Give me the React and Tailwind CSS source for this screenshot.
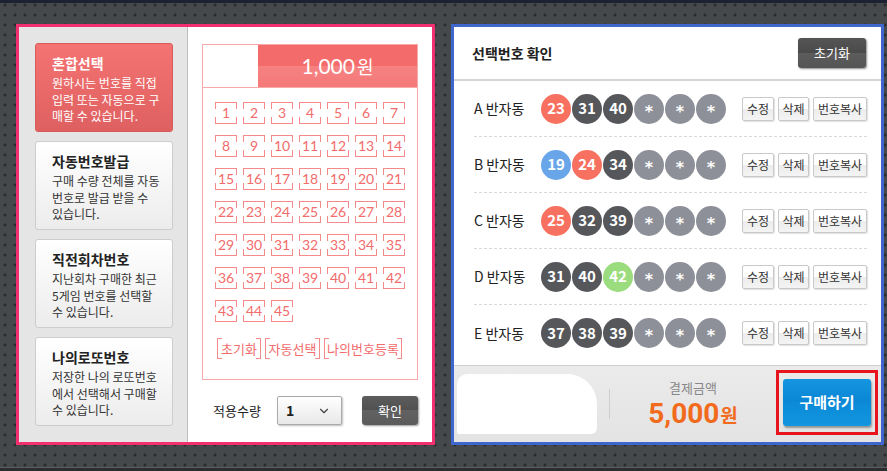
import { ChevronDown } from "lucide-react";

const MENU = [
  { title: "혼합선택", desc: ["원하시는 번호를 직접", "입력 또는 자동으로 구", "매할 수 있습니다."], active: true },
  { title: "자동번호발급", desc: ["구매 수량 전체를 자동", "번호로 발급 받을 수", "있습니다."] },
  { title: "직전회차번호", desc: ["지난회차 구매한 최근", "5게임 번호를 선택할", "수 있습니다."] },
  { title: "나의로또번호", desc: ["저장한 나의 로또번호", "에서 선택해서 구매할", "수 있습니다."] },
];

const BALL = {
  red: "bg-[#f8705f]",
  dark: "bg-[#55575b]",
  blue: "bg-[#68a6e9]",
  green: "bg-[#9bdc7e]",
  star: "bg-[#8d9098]",
};

const ROWS = [
  { label: "A 반자동", balls: [["23", "red"], ["31", "dark"], ["40", "dark"]] },
  { label: "B 반자동", balls: [["19", "blue"], ["24", "red"], ["34", "dark"]] },
  { label: "C 반자동", balls: [["25", "red"], ["32", "dark"], ["39", "dark"]] },
  { label: "D 반자동", balls: [["31", "dark"], ["40", "dark"], ["42", "green"]] },
  { label: "E 반자동", balls: [["37", "dark"], ["38", "dark"], ["39", "dark"]] },
];

const KR = "font-['Noto_Sans_CJK_KR',sans-serif]";

function NumBox({ n }) {
  return (
    <div className="relative flex h-[22px] w-[22px] items-center justify-center border-y border-[#f58a8a] font-['Lato','Noto_Sans_CJK_KR',sans-serif] text-[14px] leading-none text-[#f26c6c]">
      <span className="absolute left-0 top-0 h-[6px] w-px bg-[#f58a8a]" />
      <span className="absolute bottom-0 left-0 h-[6px] w-px bg-[#f58a8a]" />
      <span className="absolute right-0 top-0 h-[6px] w-px bg-[#f58a8a]" />
      <span className="absolute bottom-0 right-0 h-[6px] w-px bg-[#f58a8a]" />
      {n}
    </div>
  );
}

function BracketBtn({ children, w }) {
  return (
    <div className={`relative flex h-[21px] items-center justify-center border-x border-[#f58a8a] text-[13px] leading-none text-[#f26c6c] ${w}`}>
      <span className="absolute left-0 top-0 h-px w-[4px] bg-[#f58a8a]" />
      <span className="absolute bottom-0 left-0 h-px w-[4px] bg-[#f58a8a]" />
      <span className="absolute right-0 top-0 h-px w-[4px] bg-[#f58a8a]" />
      <span className="absolute bottom-0 right-0 h-px w-[4px] bg-[#f58a8a]" />
      {children}
    </div>
  );
}

function SmallBtn({ children, w }) {
  return (
    <button className={`h-[24px] rounded-[2px] border border-[#c9c9c9] bg-[linear-gradient(#ffffff,#ffffff_50%,#ececec_50%,#f4f4f4)] text-[12px] leading-none text-[#333] shadow-[1px_1px_1px_rgba(0,0,0,0.12)] ${w}`}>
      {children}
    </button>
  );
}

export default function App() {
  const nums = Array.from({ length: 45 }, (_, i) => i + 1);
  return (
    <div className={`relative h-[471px] w-[887px] overflow-hidden bg-[#46494c] bg-[radial-gradient(circle,#2a2d30_1.2px,transparent_1.8px)] bg-[size:10px_10px] ${KR}`}>
      <div className="h-[3px] bg-[#1c2232]" />
      <div className="flex gap-[16px] pl-[16px] pt-[21px]">
        {/* left panel */}
        <div className="flex h-[421px] w-[419px] border-[3px] border-[#f2306f] bg-white">
          <div className="flex w-[169px] flex-col gap-[9px] border-r border-[#bdbdbd] bg-[#e5e5e5] pl-[16px] pr-[14px] pt-[16px]">
            {MENU.map((m) => (
              <div
                key={m.title}
                className={`h-[89px] rounded-[3px] border pl-[16px] pt-[10px] ${
                  m.active
                    ? "border-[#d85a5a] bg-[linear-gradient(#f47373,#df6060)] text-white"
                    : "border-[#cdcdcd] bg-[linear-gradient(#ffffff,#ececec)] text-[#333]"
                }`}
              >
                <p className={`text-[14px] font-bold leading-[19px] ${m.active ? "text-white" : "text-[#222]"}`}>{m.title}</p>
                <div className="mt-[2px] text-[12px] leading-[16.5px]">
                  {m.desc.map((d) => (
                    <p key={d}>{d}</p>
                  ))}
                </div>
              </div>
            ))}
          </div>
          <div className="flex flex-1 flex-col px-[14px] pt-[17px]">
            <div className="h-[336px] border border-[#f9a9a9]">
              <div className="flex h-[43px] border-b border-[#f9a9a9]">
                <div className="w-[55px]" />
                <div className="flex flex-1 items-center justify-center bg-[linear-gradient(#f46b6b,#f46b6b_50%,#f68282_50%,#f57878)] font-['Lato','Noto_Sans_CJK_KR',sans-serif] text-[21px] font-normal text-white">
                  1,000<span className={`ml-[2px] text-[18px] ${KR}`}>원</span>
                </div>
              </div>
              <div className="grid grid-cols-[repeat(7,22px)] gap-x-[6px] gap-y-[11px] pl-[12px] pt-[14px]">
                {nums.map((n) => (
                  <NumBox key={n} n={n} />
                ))}
              </div>
              <div className="mt-[16px] flex gap-[4px] pl-[14px]">
                <BracketBtn w="w-[44px]">초기화</BracketBtn>
                <BracketBtn w="w-[55px]">자동선택</BracketBtn>
                <BracketBtn w="w-[78px]">나의번호등록</BracketBtn>
              </div>
            </div>
            <div className="mt-[16px] flex items-center">
              <span className="ml-[11px] w-[64px] text-[13px] text-[#222]">적용수량</span>
              <div className="flex h-[29px] w-[65px] items-center justify-between rounded-[2px] border border-[#aaa] bg-[linear-gradient(#ffffff,#e8e8e8)] pl-[8px] pr-[10px] shadow-[1px_1px_2px_rgba(0,0,0,0.25)]">
                <span className="text-[14px] font-bold text-[#222]">1</span>
                <ChevronDown size={14} strokeWidth={2} className="text-[#444]" />
              </div>
              <button className="ml-[20px] h-[29px] w-[56px] rounded-[3px] bg-[linear-gradient(#5d5d5d,#505050_50%,#626262_50%,#5a5a5a)] text-[13px] text-white shadow-[1px_1px_2px_rgba(0,0,0,0.4)]">
                확인
              </button>
            </div>
          </div>
        </div>

        {/* right panel */}
        <div className="flex h-[421px] w-[433px] flex-col border-[3px] border-[#3f66cc] bg-white">
          <div className="flex h-[54px] items-center justify-between border-b-2 border-[#d4d4d4] pl-[18px] pr-[15px]">
            <span className="text-[14px] font-bold text-[#222]">선택번호 확인</span>
            <button className="h-[30px] w-[68px] rounded-[3px] bg-[linear-gradient(#555,#4a4a4a_50%,#5c5c5c_50%,#555)] text-[13px] text-white shadow-[1px_1px_2px_rgba(0,0,0,0.45)]">
              초기화
            </button>
          </div>
          <div className="flex flex-1 flex-col pl-[20px] pr-[14px]">
            {ROWS.map((r, i) => (
              <div
                key={r.label}
                className={`flex h-[56px] items-center ${i < ROWS.length - 1 ? "border-b border-dashed border-[#d9d9d9]" : ""}`}
              >
                <span className="w-[67px] text-[14px] text-[#222]">{r.label}</span>
                <div className="flex gap-px">
                  {[...r.balls, ["*", "star"], ["*", "star"], ["*", "star"]].map(([n, c], j) => (
                    <span
                      key={j}
                      className={`flex h-[30px] w-[30px] items-center justify-center rounded-full font-bold text-white ${BALL[c]} ${
                        c === "star" ? "pt-[6px] font-['DejaVu_Sans',sans-serif] text-[16px] leading-none" : "text-[15px]"
                      }`}
                    >
                      {n}
                    </span>
                  ))}
                </div>
                <div className="ml-auto flex gap-[4px]">
                  <SmallBtn w="w-[32px]">수정</SmallBtn>
                  <SmallBtn w="w-[31px]">삭제</SmallBtn>
                  <SmallBtn w="w-[54px]">번호복사</SmallBtn>
                </div>
              </div>
            ))}
          </div>
          <div className="flex h-[77px] items-center border-t border-[#d0d0d0] bg-[linear-gradient(#ebebeb,#e3e3e3)]">
            <div className="ml-[3px] h-[60px] w-[140px] rounded-[10px_30px_6px_2px] bg-white" />
            <div className="ml-[12px] h-[30px] w-px bg-[#cfcfcf]" />
            <div className="flex w-[166px] flex-col items-center">
              <span className="text-[13px] leading-[14px] text-[#888]">결제금액</span>
              <span className="mt-[6px] flex items-baseline font-['Roboto',sans-serif] text-[28px] font-bold leading-[26px] text-[#f26b1d]">
                5,000<span className={`ml-[1px] text-[19px] ${KR}`}>원</span>
              </span>
            </div>
            <div className="mb-[4px] flex h-[65px] w-[102px] items-center justify-center border-[3px] border-[#e8141d]">
              <button className="h-[47px] w-[88px] rounded-[3px] bg-[linear-gradient(#1595e0,#0a86d4_50%,#0c8ad8_50%,#1296de)] text-[15px] font-bold text-white shadow-[1px_2px_2px_rgba(0,0,0,0.35)]">
                구매하기
              </button>
            </div>
          </div>
        </div>
      </div>
      <div className="absolute bottom-0 left-0 h-[4px] w-full border-t border-[#5a5d60] bg-[#2b2d30]" />
    </div>
  );
}
